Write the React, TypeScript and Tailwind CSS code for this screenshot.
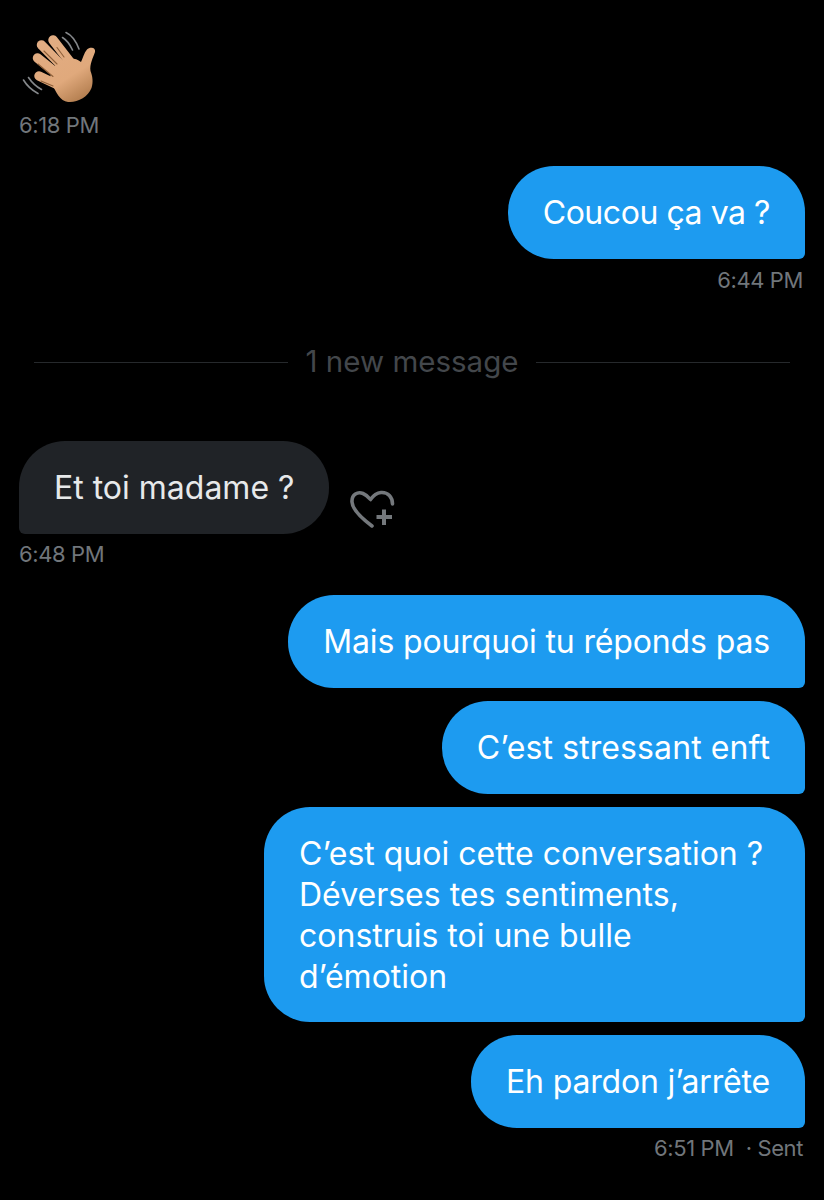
const WaveHand = () => (
  <svg width="90" height="110" viewBox="19 0 90 110" fill="none" className="block">
    <defs>
      <linearGradient id="skin" gradientUnits="userSpaceOnUse" x1="45" y1="40" x2="85" y2="102">
        <stop offset="0" stopColor="#e2ad83" />
        <stop offset="0.6" stopColor="#e0a97c" />
        <stop offset="1" stopColor="#ad7849" />
      </linearGradient>
    </defs>
    <g stroke="#85888b" strokeWidth="1.6" strokeLinecap="round">
      <path d="M66 32.500C71.500 35 76 41 79 49" />
      <path d="M62.500 37.500C66.500 40 70 44.500 72.500 50" />
      <path d="M23.500 80C26.500 85 31.500 90 38 93.500" />
      <path d="M28.500 77.500C31.500 82 36 86.500 41.500 89.500" />
    </g>
    <g stroke="url(#skin)" strokeWidth="9.500" strokeLinecap="round">
      <path d="M53 40L70 62" />
      <path d="M41.500 45L64 68" />
      <path d="M37.500 58L60 76" />
      <path d="M39 76L58 85" />
    </g>
    <path
      d="M52 84C49 78 50 70 57 64C64 58 74 56 81 62C83 58 84 53 87 49.500C90 46.500 96 47.500 95 52C93 58 89.500 64 90.500 71C92.500 76 93.500 82 91.500 88C88 97 77 103 68 102C60 101 56 92 52 84Z"
      fill="url(#skin)"
    />
    <g stroke="#8f6039" strokeWidth="1.100" strokeLinecap="round">
      <path d="M38 64L53 76.500" />
      <path d="M44 51L57 64" />
      <path d="M57 47.500L64 57" />
      <path d="M41 81L53 86" />
    </g>
  </svg>
);

const HeartPlus = () => (
  <svg width="64" height="50" viewBox="0 0 64 50" fill="none" className="mb-[4px] ml-[11px] shrink-0">
    <path
      d="M32 46C24 40 12.500 31 12 22C11.500 14 18 11.500 23 13.500C26 14.700 28.500 17 30.500 19.500C33 16 36 13 41 12.500C48 12 52.500 17 52.500 24"
      stroke="#74787c"
      strokeWidth="3.600"
      strokeLinecap="round"
      strokeLinejoin="round"
    />
    <path d="M44 29.500V45M36.500 37H52" stroke="#74787c" strokeWidth="4" />
  </svg>
);

const Stamp = ({ text, right, sent }: { text: string; right?: boolean; sent?: boolean }) => (
  <p
    className={`h-[30px] text-[22px] leading-[30px] tracking-[-0.4px] text-[#71767b] ${right ? "pr-[2px] text-right" : ""}`}
  >
    {text}
    {sent && <span className="ml-[12px]">· Sent</span>}
  </p>
);

const Bubble = ({
  lines,
  mine = true,
  className = "w-fit pb-[26px]",
}: {
  lines: string[];
  mine?: boolean;
  className?: string;
}) => (
  <div
    className={`rounded-[46px] px-[35px] pt-[26px] text-[32px] leading-[41px] ${
      mine
        ? "ml-auto rounded-br-[6px] bg-[#1d9bf0] text-white"
        : "rounded-bl-[6px] bg-[#202327] text-[#e7e9ea]"
    } ${className}`}
  >
    {lines.map((line) => (
      <div key={line} className="whitespace-nowrap">
        {line}
      </div>
    ))}
  </div>
);

const App = () => {
  return (
    <div className="h-[1200px] w-[824px] overflow-hidden bg-black px-[19px] font-['Inter',sans-serif]">
      <WaveHand />
      <Stamp text="6:18 PM" />

      <div className="mt-[26px]">
        <Bubble lines={["Coucou ça va ?"]} className="w-fit pb-[26px] tracking-[-0.45px]" />
        <div className="mt-[6px]">
          <Stamp text="6:44 PM" right />
        </div>
      </div>

      <div className="mt-[49px] flex h-[36px] items-center gap-[18px] px-[15px]">
        <div className="h-px flex-1 bg-[#26292c]" />
        <span className="pb-[3px] text-[29.500px] leading-[36px] text-[#43474b]">1 new message</span>
        <div className="h-px flex-1 bg-[#26292c]" />
      </div>

      <div className="mt-[61px] flex items-end">
        <Bubble lines={["Et toi madame ?"]} mine={false} />
        <HeartPlus />
      </div>
      <div className="mt-[5px]">
        <Stamp text="6:48 PM" />
      </div>

      <div className="mt-[26px] flex flex-col gap-[13px]">
        <Bubble lines={["Mais pourquoi tu réponds pas"]} className="w-fit pb-[26px] tracking-[-0.14px]" />
        <Bubble lines={["C’est stressant enft"]} className="w-fit pb-[26px] tracking-[0.1px]" />
        <Bubble
          lines={["C’est quoi cette conversation ?", "Déverses tes sentiments,", "construis toi une bulle", "d’émotion"]}
          className="w-[541px] pb-[25px]"
        />
        <Bubble lines={["Eh pardon j’arrête"]} className="w-fit pb-[26px] tracking-[-0.17px]" />
      </div>
      <div className="mt-[5px]">
        <Stamp text="6:51 PM" right sent />
      </div>
    </div>
  );
};

export default App;
